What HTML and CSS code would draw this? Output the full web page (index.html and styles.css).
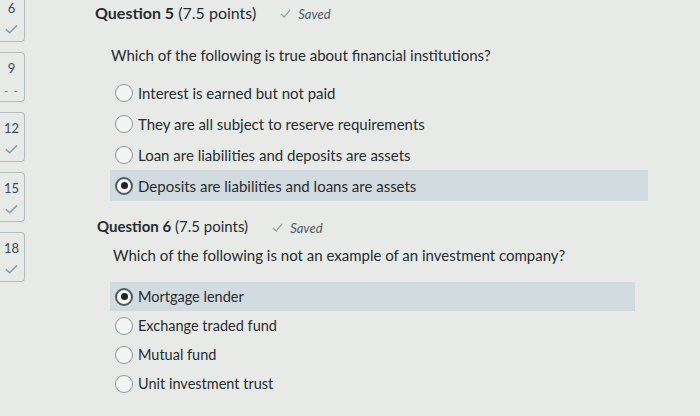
FILE: index.html
```html
<!DOCTYPE html>
<html>
<head>
<meta charset="utf-8">
<link rel="stylesheet" href="styles.css">
</head>
<body>
<div class="page">
  <nav class="sidebar">
    <div class="tile"><span class="num">6</span><svg class="chk" viewBox="0 0 14 10"><path d="M1 5.5 L5 9 L13 1"/></svg></div>
    <div class="tile"><span class="num">9</span><span class="dash">- -</span></div>
    <div class="tile"><span class="num">12</span><svg class="chk" viewBox="0 0 14 10"><path d="M1 5.5 L5 9 L13 1"/></svg></div>
    <div class="tile"><span class="num">15</span><svg class="chk" viewBox="0 0 14 10"><path d="M1 5.5 L5 9 L13 1"/></svg></div>
    <div class="tile"><span class="num">18</span><svg class="chk" viewBox="0 0 14 10"><path d="M1 5.5 L5 9 L13 1"/></svg></div>
  </nav>
  <main class="content">
    <section class="question q5">
      <div class="q-head">
        <span class="q-title"><b>Question 5</b> (7.5 points)</span>
        <span class="saved"><svg class="saved-chk" viewBox="0 0 12 10"><path d="M1 5.5 L4.5 9 L11 1"/></svg>Saved</span>
      </div>
      <p class="q-text">Which of the following is true about financial institutions?</p>
      <ul class="options">
        <li class="opt"><span class="radio"></span>Interest is earned but not paid</li>
        <li class="opt"><span class="radio"></span>They are all subject to reserve requirements</li>
        <li class="opt"><span class="radio"></span>Loan are liabilities and deposits are assets</li>
        <li class="opt selected"><span class="radio"></span>Deposits are liabilities and loans are assets</li>
      </ul>
    </section>
    <section class="question q6">
      <div class="q-head">
        <span class="q-title"><b>Question 6</b> (7.5 points)</span>
        <span class="saved"><svg class="saved-chk" viewBox="0 0 12 10"><path d="M1 5.5 L4.5 9 L11 1"/></svg>Saved</span>
      </div>
      <p class="q-text">Which of the following is not an example of an investment company?</p>
      <ul class="options">
        <li class="opt selected"><span class="radio"></span>Mortgage lender</li>
        <li class="opt"><span class="radio"></span>Exchange traded fund</li>
        <li class="opt"><span class="radio"></span>Mutual fund</li>
        <li class="opt"><span class="radio"></span>Unit investment trust</li>
      </ul>
    </section>
  </main>
</div>
</body>
</html>
```
FILE: styles.css
```css
html, body {
  margin: 0;
  padding: 0;
}
body {
  width: 700px;
  height: 416px;
  overflow: hidden;
  background: #e8eae8;
  font-family: Lato, "Open Sans", sans-serif;
  color: #262c30;
}
.page {
  display: flex;
  align-items: flex-start;
}
.sidebar {
  display: flex;
  flex-direction: column;
  gap: 10px;
  margin-top: -8px;
  margin-left: -3px;
  width: 29px;
  flex: none;
}
.tile {
  height: 50px;
  width: 28px;
  box-sizing: border-box;
  border: 1px solid #b4bcbf;
  border-left: none;
  border-radius: 0 4px 4px 0;
  display: flex;
  flex-direction: column;
  align-items: center;
  padding-top: 7px;
  padding-left: 2px;
}
.num {
  font-size: 13px;
  line-height: 16px;
  color: #3a4c5c;
}
.chk {
  width: 13px;
  height: 10px;
  margin-top: 8px;
  fill: none;
  stroke: #8ea4ad;
  stroke-width: 1.8;
}
.dash {
  font-size: 12px;
  line-height: 12px;
  margin-top: 9px;
  color: #6f818c;
  letter-spacing: 1px;
}
.content {
  margin-left: 69px;
  flex: 1;
}
.question {
  display: flex;
  flex-direction: column;
}
.q-head {
  display: flex;
  align-items: center;
  height: 24px;
  gap: 24px;
}
.q-title {
  font-size: 16px;
  color: #262c30;
}
.q-title b {
  font-weight: 700;
}
.saved {
  display: flex;
  align-items: center;
  gap: 7px;
  font-style: italic;
  font-size: 13px;
  color: #4f5d66;
  padding-top: 3px;
}
.saved-chk {
  width: 11px;
  height: 9px;
  fill: none;
  stroke: #93a4ad;
  stroke-width: 1.5;
}
.q-text {
  margin: 0;
  padding-left: 16px;
  font-size: 15px;
  line-height: 22px;
}
.q5 .q-text {
  margin-top: 20px;
}
.options {
  list-style: none;
  margin: 0;
  padding: 0 0 0 15px;
  width: 538px;
}
.q5 .options {
  margin-top: 11px;
}
.opt {
  display: flex;
  align-items: center;
  gap: 5px;
  height: 31px;
  padding-left: 5px;
  font-size: 15px;
}
.selected {
  background: #d2dbe0;
}
.radio {
  width: 18px;
  height: 18px;
  box-sizing: border-box;
  border-radius: 50%;
  border: 1px solid #8c989f;
  background: #f3f4f4;
  flex: none;
  display: flex;
  align-items: center;
  justify-content: center;
}
.selected .radio {
  border: 2px solid #4f5a61;
  background: #f7f8f8;
}
.selected .radio::after {
  content: "";
  width: 7px;
  height: 7px;
  border-radius: 50%;
  background: #1e2428;
}
.q6 {
  margin-top: 13px;
  margin-left: 2px;
}
.q6 .q-title {
  font-size: 15px;
}
.q6 .q-text {
  margin-top: 6px;
}
.q6 .options {
  margin-top: 16px;
  width: 525px;
  padding-left: 13px;
}
.q6 .opt {
  height: 29px;
  font-size: 14.5px;
}
```
